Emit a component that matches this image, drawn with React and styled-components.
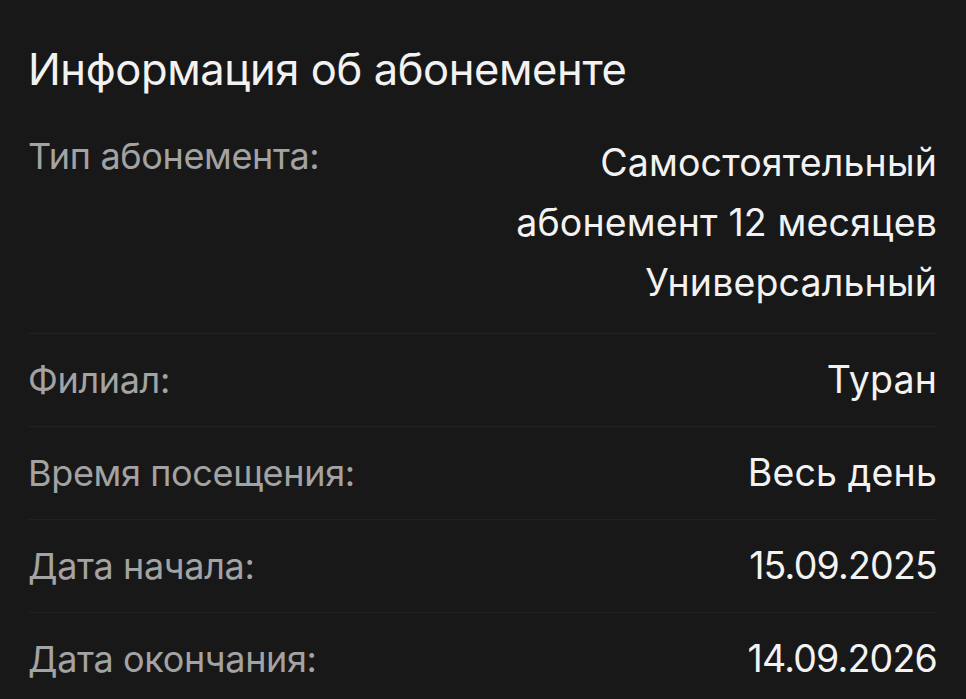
import React from "react";
import styled, { createGlobalStyle } from "styled-components";

const GlobalStyle = createGlobalStyle`
  html, body {
    margin: 0;
    padding: 0;
    background: #181818;
  }
  body {
    font-family: Inter, "Noto Sans", "DejaVu Sans", sans-serif;
    -webkit-font-smoothing: antialiased;
  }
`;

const rows = [
  {
    label: "Тип абонемента:",
    value: ["Самостоятельный", "абонемент 12 месяцев", "Универсальный"],
  },
  { label: "Филиал:", value: ["Туран"] },
  { label: "Время посещения:", value: ["Весь день"] },
  { label: "Дата начала:", value: ["15.09.2025"], numeric: true },
  { label: "Дата окончания:", value: ["14.09.2026"], numeric: true },
];

const App = () => {
  return (
    <>
      <GlobalStyle />
      <Wrapper>
        <Title>Информация об абонементе</Title>
        <List>
          {rows.map((row) => (
            <Row key={row.label} $multi={row.value.length > 1}>
              <Label>{row.label}</Label>
              <Value $numeric={row.numeric}>
                {row.value.map((line) => (
                  <span key={line}>{line}</span>
                ))}
              </Value>
            </Row>
          ))}
        </List>
      </Wrapper>
    </>
  );
};

const Wrapper = styled.section`
  min-height: 699px;
  box-sizing: border-box;
  padding: 43px 29px 0 28px;
  background: #181818;
`;

const Title = styled.h1`
  margin: 0 0 22px;
  font-size: 43.5px;
  line-height: 52px;
  font-weight: 400;
  color: #f2f2f2;
  letter-spacing: -0.4px;
`;

const List = styled.div`
  display: flex;
  flex-direction: column;
`;

const Row = styled.div`
  display: flex;
  justify-content: space-between;
  align-items: ${({ $multi }) => ($multi ? "flex-start" : "center")};
  padding: 16px 0 ${({ $multi }) => ($multi ? "20px" : "16px")};
  border-bottom: 1px solid #212121;

  &:last-child {
    border-bottom: none;
  }
`;

const Label = styled.span`
  font-size: 36px;
  line-height: 46px;
  color: #a3a3a3;
  letter-spacing: -0.35px;
`;

const Value = styled.div`
  display: flex;
  flex-direction: column;
  align-items: flex-end;
  text-align: right;
  font-size: 37.5px;
  line-height: 60px;
  color: #f2f2f2;
  letter-spacing: ${({ $numeric }) => ($numeric ? "-0.8px" : "0.15px")};
`;

export default App;
